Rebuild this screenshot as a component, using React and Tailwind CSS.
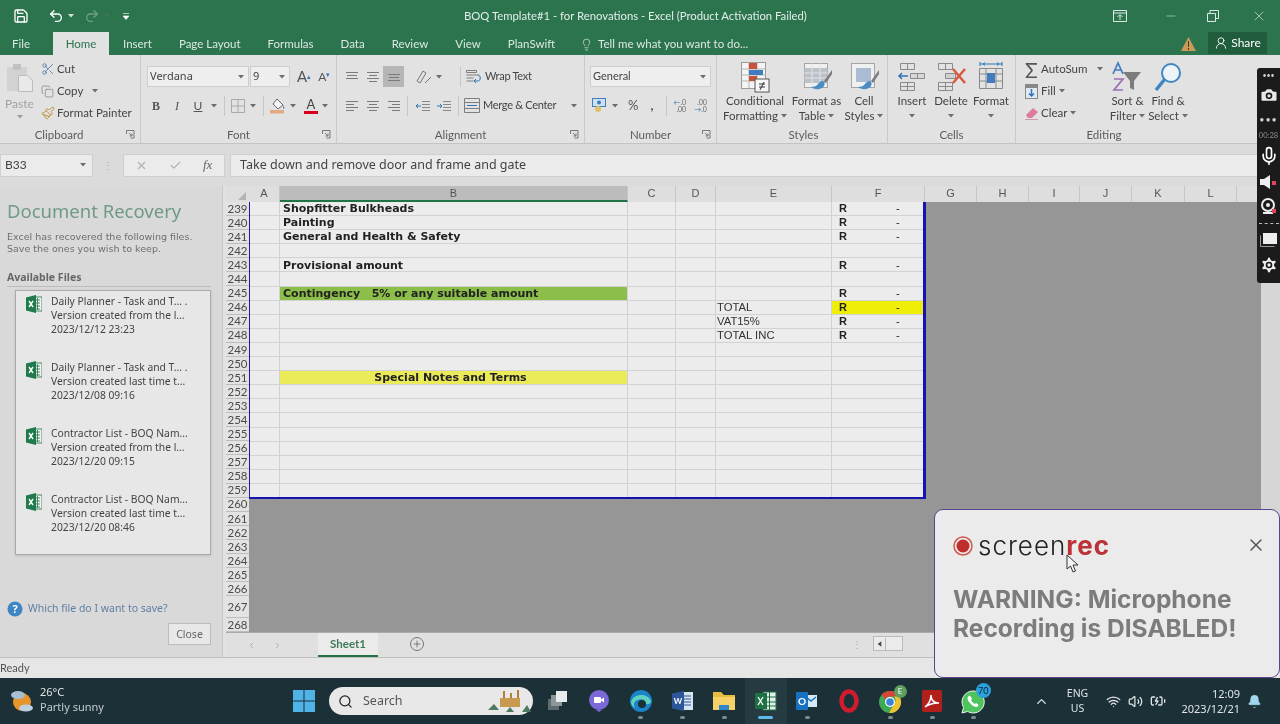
import {
  Scissors, Copy, Paintbrush, Undo2, Redo2, X, Minus, Lightbulb, UserRound, Save, Search, Camera, Mic,
  Settings, ChevronUp, Wifi, Volume2, BatteryCharging, Bell, Plus, ChevronLeft, ChevronRight, Check,
} from "lucide-react";

const ui = "font-['Lato',sans-serif]";
const sans = "font-['Noto_Sans',sans-serif]";
const verdana = "font-['DejaVu_Sans',sans-serif]";

function Caret({ className = "" }) {
  return (
    <svg width="6" height="4" viewBox="0 0 6 4" className={"shrink-0 " + className}>
      <path d="M0 0h6L3 3.5z" fill="#6d6d6d" />
    </svg>
  );
}

function Launcher() {
  return (
    <svg width="9" height="9" viewBox="0 0 9 9" className="absolute right-[5px] top-[5px]">
      <path d="M.5 4V.5H8V8H4.5M3 3l3 3M6 3.5V6H3.5" fill="none" stroke="#777" />
    </svg>
  );
}

function Group({ className, label, launcher, children }) {
  return (
    <div className={"flex flex-col border-r border-[#cacaca] shrink-0 " + className}>
      <div className="h-[70px] flex">{children}</div>
      <div className="relative h-[18px] text-center text-[11.5px] leading-[20px] text-[#5c5c5c]">
        {label}
        {launcher && <Launcher />}
      </div>
    </div>
  );
}

function Big({ className, icon, l1, l2, caret }) {
  return (
    <div className={"flex flex-col items-center text-[11.5px] leading-[15px] text-[#444] shrink-0 " + className}>
      <div className="h-[38px] pt-[5px] flex items-center justify-center">{icon}</div>
      <div className="whitespace-nowrap h-[15px]">{l1}</div>
      <div className="whitespace-nowrap h-[15px] flex items-center gap-[3px]">
        {l2}
        {caret && <Caret />}
      </div>
    </div>
  );
}

function Lines({ kind }) {
  const rows = {
    left: [[2, 14], [2, 10], [2, 14], [2, 10]],
    center: [[2, 14], [4, 12], [2, 14], [4, 12]],
    right: [[2, 14], [6, 14], [2, 14], [6, 14]],
    top: [[2, 14], [3, 13], [2, 14]],
  }[kind];
  return (
    <svg width="16" height="14" viewBox="0 0 16 14">
      {rows.map((r, i) => (
        <path key={i} d={`M${r[0]} ${2 + i * 3}.5H${r[1]}`} stroke="#7a7a7a" />
      ))}
    </svg>
  );
}

function SmallTool({ icon, text, caret }) {
  return (
    <div className="h-[22px] flex items-center text-[11.5px] text-[#444] whitespace-nowrap">
      <div className="w-[17px] flex justify-center shrink-0">{icon}</div>
      <span className="ml-[1px]">{text}</span>
      {caret}
    </div>
  );
}

function CondIcon() {
  return (
    <svg width="32" height="32" viewBox="0 0 32 32">
      <rect x="2.5" y="1.5" width="24" height="26" fill="#f4f4f4" stroke="#9a9a9a" />
      <path d="M2.5 8h24M2.5 14h24M2.5 20h24M10 1.5v26M18 1.5v26" stroke="#b5b5b5" />
      <rect x="10" y="2" width="8" height="6" fill="#c8523a" />
      <rect x="10" y="9" width="14" height="5" fill="#3f7cc0" />
      <rect x="10" y="15" width="8" height="5" fill="#c8523a" />
      <rect x="16" y="18" width="14" height="13" fill="#f6f6f6" stroke="#555" />
      <path d="M20 23h6M20 26h6M25 21l-4 8" stroke="#333" fill="none" />
    </svg>
  );
}

function TableIcon({ cell }) {
  return (
    <svg width="32" height="32" viewBox="0 0 32 32">
      <rect x="3.5" y="2.5" width="23" height="24" fill="#f0f0f0" stroke="#a5a5a5" />
      {cell ? (
        <rect x="8" y="7" width="15" height="14" fill="#a9bcd4" />
      ) : (
        <path d="M3.5 7h23v15h-23z" fill="#bcc2c9" />
      )}
      {!cell && <path d="M3.5 12h23M3.5 17h23M11 2.5v24M19 2.5v24" stroke="#e3e3e3" />}
      <path d="M31 9 23 20l2 2 6-9z" fill="#7b7b7b" />
      <path d="M22 20c-3 0-4 2-5 3-1 2-4 3-7 3 3 3 11 3 13-1 1-2 1-4-1-5z" fill="#4a8cc4" />
    </svg>
  );
}

function CellsIcon({ type }) {
  return (
    <svg width="32" height="32" viewBox="0 0 32 32">
      {type === "insert" && (
        <g fill="none" stroke="#8a8a8a">
          <path d="M4.5 2.5h14v6h-14zM11.5 2.5v6M4.5 21.5h14v8h-14zM11.5 21.5v8M4.5 25.5h14" />
          <path d="M14.5 12.5h14v5h-14zM21.5 12.5v5" fill="#d8d8d8" />
          <path d="M3 15h9M6 12l-3 3 3 3" stroke="#2f74b5" strokeWidth="1.5" />
        </g>
      )}
      {type === "delete" && (
        <g fill="none" stroke="#8a8a8a">
          <path d="M3.5 2.5h14v6h-14zM10.5 2.5v6M3.5 21.5h14v8h-14zM10.5 21.5v8M3.5 25.5h14" />
          <path d="M10.5 12.5h10v5h-10z" fill="#d0d0d0" />
          <path d="M18 8l12 14M30 8 18 22" stroke="#d9573c" strokeWidth="2.4" />
        </g>
      )}
      {type === "format" && (
        <g fill="none" stroke="#8a8a8a">
          <path d="M4.5 7.5h23v20h-23zM4.5 13h23M4.5 20h23M11 7.5v20M21 7.5v20" />
          <rect x="12" y="12" width="8" height="10" fill="#3f7cc0" stroke="none" />
          <path d="M5 3h22M5 1v4M27 1v4M8 3l2-1.5M8 3l2 1.5M24 3l-2-1.5M24 3l-2 1.5" stroke="#2f74b5" />
        </g>
      )}
    </svg>
  );
}

function ExcelFile() {
  return (
    <svg width="16" height="18" viewBox="0 0 16 18" className="shrink-0">
      <rect x="6" y="2" width="10" height="14" fill="#f2f2f2" stroke="#1e7145" strokeWidth=".8" />
      <path d="M9 5h5M9 8h5M9 11h5M9 14h5M11.5 3v12" stroke="#1e7145" strokeWidth=".8" />
      <path d="M0 2.5 10 0v18L0 15.5z" fill="#1f7a4c" />
      <path d="M3 6l4 6M7 6l-4 6" stroke="#fff" strokeWidth="1.4" />
    </svg>
  );
}

function Recovered({ name, note, date }) {
  return (
    <div className="h-[66px] flex pl-[10px] pt-[3px] gap-[9px]">
      <ExcelFile />
      <div className="text-[10.3px] leading-[14px] text-[#444] whitespace-nowrap -mt-[1px]">
        <div>{name}</div>
        <div>{note}</div>
        <div>{date}</div>
      </div>
    </div>
  );
}

const colWidths = ["w-[30px]", "w-[348px]", "w-[48px]", "w-[40px]", "w-[116px]", "w-[91px]"];

const sheet = {
  239: { b: "Shopfitter Bulkheads", r: 1 },
  240: { b: "Painting", r: 1 },
  241: { b: "General and Health & Safety", r: 1 },
  242: {},
  243: { b: "Provisional amount", r: 1 },
  244: {},
  245: { b: "Contingency   5% or any suitable amount", r: 1, fill: "bg-[#8bbf49]" },
  246: { e: "TOTAL", r: 1, rFill: "bg-[#eeee08]" },
  247: { e: "VAT15%", r: 1 },
  248: { e: "TOTAL INC", r: 1 },
  249: {},
  250: {},
  251: { b: "Special Notes and Terms", center: 1, fill: "bg-[#ebeb5a]" },
  252: {}, 253: {}, 254: {}, 255: {}, 256: {}, 257: {}, 258: {}, 259: {},
};

function RowHead({ n, className = "h-[14.1px]" }) {
  return (
    <div className={"w-[23px] flex items-center justify-center bg-[#e3e3e3] border-b border-[#bdbdbd] text-[11.5px] leading-none text-[#4a4a4a] overflow-hidden " + className}>
      {n}
    </div>
  );
}

function SheetRow({ data }) {
  const cell = "h-full border-r border-[#d2d2d2] shrink-0";
  return (
    <div className="flex h-[14.1px] border-b border-[#d2d2d2]">
      <div className={cell + " " + colWidths[0]} />
      <div
        className={
          cell + " " + colWidths[1] + " " + (data.fill || "") + " pl-[3px] pt-[2px] flex items-center whitespace-pre font-bold text-[11px] text-[#222] " +
          verdana + (data.center ? " justify-center pr-[9px]" : "")
        }
      >
        {data.b}
      </div>
      <div className={cell + " " + colWidths[2]} />
      <div className={cell + " " + colWidths[3]} />
      <div className={cell + " " + colWidths[4] + " pl-[1px] flex items-center text-[11.3px] text-[#333] font-['Liberation_Sans',sans-serif]"}>{data.e}</div>
      <div className={"h-full shrink-0 " + colWidths[5] + " " + (data.rFill || "") + " flex items-center text-[11px] text-[#222] font-['Liberation_Sans',sans-serif]"}>
        {data.r && <b className="ml-[7px] w-[57px]">R</b>}
        {data.r && <span>-</span>}
      </div>
    </div>
  );
}

function TaskIcon({ children, dot, active }) {
  return (
    <div className={"w-[41.6px] h-[46px] flex flex-col items-center pt-[9px] shrink-0 " + (active ? "bg-[#263b41]" : "")}>
      <div className="h-[28px] flex items-center justify-center">{children}</div>
      <div className={"mt-[1px] h-[3px] rounded-full " + (active ? "w-[15px] bg-[#5dbbe8]" : dot ? "w-[5px] bg-[#7d8a8e]" : "")} />
    </div>
  );
}

export default function App() {
  const heads = [
    ["A", "w-[31px]"], ["B", "w-[348px] bg-[#bcbcbc] border-b-2 border-b-[#217346]"], ["C", "w-[48px]"], ["D", "w-[40px]"],
    ["E", "w-[116px]"], ["F", "w-[93px]"], ["G", "w-[52px]"], ["H", "w-[52px]"], ["I", "w-[51px]"], ["J", "w-[52px]"], ["K", "w-[53px]"], ["L", "w-[52px]"],
  ];

  return (
    <div className={"relative w-[1280px] h-[724px] overflow-hidden flex flex-col bg-[#e2e2e2] blur-[0.4px] " + ui}>
      {/* title bar */}
      <div className="relative h-[32px] bg-[#2b744d] flex items-center text-white shrink-0">
        <Save size={16} strokeWidth={2} className="ml-[13px]" />
        <Undo2 size={16} className="ml-[19px]" />
        <Caret className="ml-[4px] brightness-200" />
        <Redo2 size={16} className="ml-[10px] opacity-30" />
        <Caret className="ml-[4px] opacity-40" />
        <svg width="6" height="7" viewBox="0 0 6 7" className="ml-[13px]"><path d="M0 .5h6M0 3h6L3 6.5z" stroke="#fff" strokeWidth=".6" fill="#fff" /></svg>
        <div className="ml-[335px] text-[11.3px] text-[#e3eee8] whitespace-nowrap">BOQ Template#1 - for Renovations - Excel (Product Activation Failed)</div>
        <div className="ml-auto flex items-center text-[#dfeae4]">
          <svg width="14" height="12" viewBox="0 0 14 12" className="mr-[37px]"><path d="M.5.5h13v11H.5zM.5 3h13M7 10V5M4.5 7 7 4.5 9.500 7" fill="none" stroke="currentColor" /></svg>
          <Minus size={14} strokeWidth={1} className="mr-[29px]" />
          <svg width="12" height="12" viewBox="0 0 12 12" className="mr-[32px]"><path d="M.5 3.500h8v8h-8zM3 3.500V.5h8.500v8H8.500" fill="none" stroke="currentColor" /></svg>
          <X size={16} strokeWidth={1} className="mr-[13px]" />
        </div>
      </div>

      {/* tab row */}
      <div className="h-[23px] bg-[#2b744d] flex items-end text-[11.5px] text-[#dce8e1] shrink-0 relative">
        <div className="w-[53px] pl-[12px] leading-[22px]">File</div>
        <div className="w-[56px] h-[23px] bg-[#e2e2e2] text-[#2b744d] text-center leading-[23px]">Home</div>
        <div className="ml-[14px] leading-[23px]">Insert</div>
        <div className="ml-[27px] leading-[23px]">Page Layout</div>
        <div className="ml-[27px] leading-[23px]">Formulas</div>
        <div className="ml-[27px] leading-[23px]">Data</div>
        <div className="ml-[27px] leading-[23px]">Review</div>
        <div className="ml-[27px] leading-[23px]">View</div>
        <div className="ml-[27px] leading-[23px]">PlanSwift</div>
        <Lightbulb size={13} strokeWidth={1.3} className="ml-[25px] mb-[4px]" />
        <div className="ml-[5px] leading-[23px]">Tell me what you want to do...</div>
        <svg width="15" height="14" viewBox="0 0 15 14" className="ml-auto mr-[12px] mb-[4px]"><path d="M7.500 0 15 14H0z" fill="#cc9a55" /><path d="M7.500 4v6M7.500 11v2" stroke="#3c3c3c" /></svg>
        <div className="w-[59px] h-[22px] mr-[13px] mb-[1px] bg-[#1f5d3c] flex items-center justify-center gap-[3px] text-[12px] text-white">
          <UserRound size={14} strokeWidth={1.5} />
          Share
        </div>
      </div>

      {/* ribbon */}
      <div className="h-[89px] flex bg-[#e2e2e2] shrink-0 border-b border-[#c4c4c4]">
        <Group className="w-[141px]" label={<span className="-ml-[22px]">Clipboard</span>} launcher>
          <div className="w-[39px] flex flex-col items-center opacity-60 text-[12px] text-[#777]">
            <svg width="28" height="30" viewBox="0 0 28 30" className="mt-[8px]">
              <rect x="1" y="4" width="20" height="24" fill="#c9c9c9" />
              <rect x="7" y="1" width="8" height="6" fill="#aaa" />
              <path d="M12.500 12.500h9l5 5v11h-14z" fill="#efefef" stroke="#a2a2a2" />
            </svg>
            <div className="mt-[3px] leading-[15px]">Paste</div>
            <Caret className="mt-[4px]" />
          </div>
          <div className="flex flex-col pt-[3px]">
            <SmallTool icon={<Scissors size={14} strokeWidth={1.4} className="text-[#4a7aa8]" />} text="Cut" />
            <SmallTool icon={<Copy size={13} strokeWidth={1.2} className="text-[#777]" />} text="Copy" caret={<Caret className="ml-[9px]" />} />
            <SmallTool icon={<Paintbrush size={14} strokeWidth={1.6} className="text-[#b98a2e]" />} text="Format Painter" />
          </div>
        </Group>

        <Group className="w-[196px]" label="Font" launcher>
          <div className="flex flex-col pl-[6px] pt-[11px]">
            <div className="flex items-center h-[21px]">
              <div className={"w-[102px] h-[21px] bg-[#eeeeee] border border-[#cfcfcf] flex items-center px-[2px] text-[11px] text-[#444] " + sans}>
                Verdana
                <Caret className="ml-auto mr-[2px]" />
              </div>
              <div className={"w-[40px] h-[21px] ml-[1px] bg-[#eeeeee] border border-[#cfcfcf] flex items-center px-[2px] text-[11px] text-[#444] " + sans}>
                9
                <Caret className="ml-auto mr-[2px]" />
              </div>
              <span className="ml-[7px] text-[15px] text-[#555]">A<sup className="text-[7px] text-[#2f74b5]">▴</sup></span>
              <span className="ml-[7px] text-[12px] text-[#555]">A<sup className="text-[7px] text-[#2f74b5]">▾</sup></span>
            </div>
            <div className="flex items-center h-[21px] mt-[8px] text-[12px] text-[#555]">
              <b className="w-[16px] ml-[1px] text-center font-['Liberation_Serif',serif]">B</b>
              <i className="w-[16px] ml-[5px] text-center font-['Liberation_Serif',serif]">I</i>
              <u className="w-[16px] ml-[5px] text-center">U</u>
              <Caret className="ml-[5px]" />
              <div className="w-px h-[20px] bg-[#c6c6c6] ml-[7px]" />
              <svg width="14" height="14" viewBox="0 0 14 14" className="ml-[6px]"><path d="M.5.5h13v13H.5zM7 .5v13M.5 7h13" fill="none" stroke="#aaa" /></svg>
              <Caret className="ml-[5px]" />
              <div className="w-px h-[20px] bg-[#c6c6c6] ml-[7px]" />
              <svg width="16" height="17" viewBox="0 0 16 17" className="ml-[6px]"><path d="m7 2 6 6-5 4-5-5z" fill="#f4f4f4" stroke="#666" /><path d="M13 8c1 2 2 3 1 4-1 0-1-2-1-4z" fill="#3f7cc0" /><rect y="13" width="14" height="3.500" fill="#e3a982" /></svg>
              <Caret className="ml-[4px]" />
              <div className="w-[16px] ml-[7px] flex flex-col items-center text-[13px] leading-[13px] text-[#444]">
                A
                <div className="w-[14px] h-[3px] bg-[#d6001c]" />
              </div>
              <Caret className="ml-[3px]" />
            </div>
          </div>
        </Group>

        <Group className="w-[248px]" label="Alignment" launcher>
          <div className="flex flex-col pl-[4px] pt-[11px]">
            <div className="flex items-center h-[21px]">
              <div className="w-[21px] flex justify-center"><Lines kind="top" /></div>
              <div className="w-[21px] flex justify-center"><Lines kind="center" /></div>
              <div className="w-[21px] h-[21px] bg-[#b6b6b6] flex items-end justify-center pb-[1px]"><Lines kind="top" /></div>
              <svg width="17" height="16" viewBox="0 0 17 16" className="ml-[11px]"><path d="M2 12 8 2l3 2-6 10zM10 14l6-6" fill="none" stroke="#777" /></svg>
              <Caret className="ml-[4px]" />
              <div className="w-px h-[20px] bg-[#c6c6c6] ml-[18px]" />
              <svg width="16" height="16" viewBox="0 0 16 16" className="ml-[5px]"><path d="M.5 1.500h10v2H.5zM.5 6h12M.5 9h7M.5 12h7" fill="none" stroke="#7e7e7e" /><path d="M8 12h4c3 0 3-6 0-6M10 10l-2 2 2 2" fill="none" stroke="#2f74b5" /></svg>
              <span className="ml-[3px] text-[11px] tracking-[-0.3px] text-[#444] whitespace-nowrap">Wrap Text</span>
            </div>
            <div className="flex items-center h-[21px] mt-[8px]">
              <div className="w-[21px] flex justify-center"><Lines kind="left" /></div>
              <div className="w-[21px] flex justify-center"><Lines kind="center" /></div>
              <div className="w-[21px] flex justify-center"><Lines kind="right" /></div>
              <div className="w-px h-[20px] bg-[#c6c6c6] ml-[3px]" />
              <svg width="16" height="14" viewBox="0 0 16 14" className="ml-[7px]"><path d="M7 2.500h8M7 5.500h8M7 8.500h8M7 11.500h8" stroke="#888" /><path d="M6 7H1M3 5 1 7l2 2" stroke="#2f74b5" fill="none" /></svg>
              <svg width="16" height="14" viewBox="0 0 16 14" className="ml-[5px]"><path d="M7 2.500h8M7 5.500h8M7 8.500h8M7 11.500h8" stroke="#888" /><path d="M1 7h5M4 5l2 2-2 2" stroke="#2f74b5" fill="none" /></svg>
              <div className="w-px h-[20px] bg-[#c6c6c6] ml-[6px]" />
              <svg width="16" height="15" viewBox="0 0 16 15" className="ml-[5px]"><path d="M.5 .5h15v14H.5zM.5 4.500h15M.5 10.500h15" fill="none" stroke="#7e7e7e" /><path d="M3 7.500h10" stroke="#2f74b5" /></svg>
              <span className="ml-[3px] w-[88px] text-[11px] tracking-[-0.3px] text-[#444] whitespace-nowrap">Merge &amp; Center</span>
              <Caret />
            </div>
          </div>
        </Group>

        <Group className="w-[132px]" label="Number" launcher>
          <div className="flex flex-col pl-[5px] pt-[11px]">
            <div className="w-[121px] h-[21px] bg-[#eeeeee] border border-[#cfcfcf] flex items-center px-[2px] text-[11px] text-[#444]">
              General
              <Caret className="ml-auto mr-[2px]" />
            </div>
            <div className="flex items-center h-[21px] mt-[8px] text-[#555]">
              <svg width="16" height="15" viewBox="0 0 16 15" className="ml-[2px]"><rect x=".5" y=".5" width="13" height="8" fill="#cfe0f0" stroke="#3f7cc0" /><circle cx="7" cy="4.500" r="2" fill="#3f7cc0" /><circle cx="6" cy="11" r="3" fill="#e3c06a" /></svg>
              <Caret className="ml-[4px]" />
              <span className="ml-[10px] text-[13px]">%</span>
              <span className="ml-[12px] text-[13px] font-bold">,</span>
              <div className="w-px h-[20px] bg-[#c6c6c6] ml-[13px]" />
              <div className="ml-[6px] text-[7px] leading-[7px] text-[#666] text-right"><span className="text-[#2f74b5]">←</span>.0<br />.00</div>
              <div className="ml-[8px] text-[7px] leading-[7px] text-[#666] text-right">.00<br /><span className="text-[#2f74b5]">→</span>.0</div>
            </div>
          </div>
        </Group>

        <Group className="w-[171px] pl-[3px]" label="Styles">
          <Big className="w-[70px]" icon={<CondIcon />} l1="Conditional" l2="Formatting" caret />
          <Big className="w-[53px]" icon={<TableIcon />} l1="Format as" l2="Table" caret />
          <Big className="w-[42px]" icon={<TableIcon cell />} l1="Cell" l2="Styles" caret />
        </Group>

        <Group className="w-[128px]" label="Cells">
          <Big className="w-[48px]" icon={<CellsIcon type="insert" />} l1="Insert" l2="" caret />
          <Big className="w-[30px]" icon={<CellsIcon type="delete" />} l1="Delete" l2="" caret />
          <Big className="w-[50px]" icon={<CellsIcon type="format" />} l1="Format" l2="" caret />
        </Group>

        <Group className="w-[176px] border-r-0" label="Editing">
          <div className="w-[92px] pl-[7px] pt-[3px] flex flex-col">
            <SmallTool icon={<span className="text-[21px] leading-none text-[#555]">Σ</span>} text="AutoSum" caret={<Caret className="ml-[9px]" />} />
            <SmallTool
              icon={<svg width="13" height="15" viewBox="0 0 13 15"><rect y="0" width="13" height="3" fill="#888" /><rect x=".5" y="3.500" width="12" height="11" fill="#dfe9f3" stroke="#888" /><path d="M6.500 5v7M4 9.500l2.500 2.500L9 9.500" fill="none" stroke="#2f74b5" strokeWidth="1.500" /></svg>}
              text="Fill"
              caret={<Caret className="ml-[3px]" />}
            />
            <SmallTool
              icon={<svg width="14" height="14" viewBox="0 0 14 14"><path d="M1 9 8 2l5 4-6 6H3z" fill="#dc7c9c" /><path d="M0 13.500h13" stroke="#c9a" /></svg>}
              text="Clear"
              caret={<Caret className="ml-[3px]" />}
            />
          </div>
          <Big
            className="w-[39px]"
            icon={
              <svg width="32" height="32" viewBox="0 0 32 32">
                <path d="M1 13 6 2l5 11M3 9h6" fill="none" stroke="#3f7cc0" strokeWidth="1.700" />
                <path d="M2 18h9l-9 11h9" fill="none" stroke="#9a6fb8" strokeWidth="1.700" />
                <path d="M11 11h18l-7 9v9l-4-2v-7z" fill="#7c7c7c" />
              </svg>
            }
            l1="Sort &"
            l2="Filter"
            caret
          />
          <Big
            className="w-[42px]"
            icon={
              <svg width="32" height="32" viewBox="0 0 32 32">
                <circle cx="19" cy="12" r="9" fill="#eef3f8" stroke="#3f86c4" strokeWidth="2" />
                <path d="M12.500 18.500 4 29" stroke="#3f86c4" strokeWidth="3.500" />
              </svg>
            }
            l1="Find &"
            l2="Select"
            caret
          />
        </Group>
      </div>

      {/* formula bar */}
      <div className="h-[42px] bg-[#dbdbdb] flex items-center shrink-0 text-[#555]">
        <div className="w-[93px] h-[23px] bg-[#ebebeb] border border-[#cfcfcf] flex items-center pl-[4px] text-[12px] text-[#444]">
          B33
          <Caret className="ml-auto mr-[6px]" />
        </div>
        <div className="w-[30px] text-center text-[10px] text-[#aaa]">⋮</div>
        <div className="w-[102px] h-[23px] bg-[#ebebeb] border border-[#cfcfcf] flex items-center text-[#b0b0b0]">
          <X size={13} className="ml-[11px]" />
          <Check size={13} className="ml-[21px]" />
          <i className="ml-[21px] text-[13px] text-[#666] font-['Liberation_Serif',serif]">fx</i>
        </div>
        <div className={"ml-[5px] flex-1 h-[23px] bg-[#ebebeb] border border-[#cfcfcf] flex items-center pl-[9px] text-[12.5px] text-[#444] whitespace-nowrap " + sans}>
          Take down and remove door and frame and gate
        </div>
      </div>

      {/* workspace */}
      <div className="flex-1 flex min-h-0">
        <div className={"w-[223px] shrink-0 bg-[#d9d9d9] border-r border-[#c8c8c8] flex flex-col pl-[7px] pr-[11px] " + sans}>
          <div className="mt-[12px] text-[18.5px] leading-[26px] text-[#6f9a84] whitespace-nowrap">Document Recovery</div>
          <div className={"mt-[7px] text-[9.5px] leading-[12px] text-[#6f6f6f] whitespace-nowrap " + verdana}>
            Excel has recovered the following files.
            <br />
            Save the ones you wish to keep.
          </div>
          <div className="mt-[15px] h-[17px] text-[10.5px] font-bold leading-[14px] text-[#666] border-b border-[#bcbcbc]">Available Files</div>
          <div className="mt-[3px] ml-[8px] h-[265px] w-[196px] bg-[#e7e7e7] border border-[#a9a9a9] pt-[1px] shadow-sm">
            <Recovered name="Daily Planner - Task and T... ." note="Version created from the l..." date="2023/12/12 23:23" />
            <Recovered name="Daily Planner - Task and T... ." note="Version created last time t..." date="2023/12/08 09:16" />
            <Recovered name="Contractor List - BOQ Nam..." note="Version created from the l..." date="2023/12/20 09:15" />
            <Recovered name="Contractor List - BOQ Nam..." note="Version created last time t..." date="2023/12/20 08:46" />
          </div>
          <div className="mt-[46px] flex items-center h-[16px] text-[10.500px] text-[#5f7fa3] whitespace-nowrap">
            <svg width="16" height="16" viewBox="0 0 16 16" className="shrink-0"><circle cx="8" cy="8" r="7.500" fill="#3f86c4" /><text x="8" y="12" textAnchor="middle" fontSize="11" fontWeight="700" fill="#fff">?</text></svg>
            <span className="ml-[5px]">Which file do I want to save?</span>
          </div>
          <div className="mt-[6px] ml-auto w-[43px] h-[22px] bg-[#e8e8e8] border border-[#bdbdbd] text-center text-[10.500px] leading-[20px] text-[#666]">Close</div>
        </div>

        <div className="flex-1 min-w-0 ml-[3px] flex flex-col">
          {/* column headers */}
          <div className="h-[16px] flex bg-[#dedede] shrink-0 text-[11px] text-[#555] font-['Liberation_Sans',sans-serif]">
            <div className="w-[23px] shrink-0 flex items-end justify-end pr-[3px] pb-[2px]">
              <svg width="8" height="8" viewBox="0 0 8 8"><path d="M8 0v8H0z" fill="#b3b3b3" /></svg>
            </div>
            {heads.map(([h, w]) => (
              <div key={h} className={"shrink-0 text-center leading-[15px] border-r border-[#c6c6c6] " + w}>{h}</div>
            ))}
            <div className="flex-1" />
          </div>

          {/* cells */}
          <div className="h-[430px] flex bg-[#969696] shrink-0 overflow-hidden">
            <div className="flex flex-col shrink-0">
              {Object.keys(sheet).map((n) => (
                <RowHead key={n} n={n} />
              ))}
              {[260, 261, 262, 263, 264, 265, 266].map((n) => (
                <RowHead key={n} n={n} />
              ))}
              <RowHead n="267" className="h-[22px]" />
              <RowHead n="268" className="h-[14px]" />
            </div>
            <div className="h-[297px] w-[677px] bg-[#ececec] border-l border-l-[#1c1c9c] border-r-[3px] border-b-[2px] border-r-[#1414b0] border-b-[#1414b0] overflow-hidden shrink-0">
              {Object.entries(sheet).map(([n, d]) => (
                <SheetRow key={n} data={d} />
              ))}
            </div>
            <div className="flex-1" />
            <div className="w-[19px] bg-[#d6d6d6] shrink-0" />
          </div>

          {/* sheet tabs */}
          <div className="flex-1 flex items-start bg-[#e0e0e0] border-t border-[#aaa] text-[#9c9c9c]">
            <ChevronLeft size={9} className="ml-[21px] mt-[8px]" />
            <ChevronRight size={9} className="ml-[17px] mt-[8px]" />
            <div className="ml-[36px] w-[60px] h-[24px] bg-[#ebebeb] border-b-2 border-[#217346] text-[11.5px] leading-[22px] font-bold text-center text-[#3f7a58]">Sheet1</div>
            <div className="ml-[32px] mt-[4px] w-[14px] h-[14px] rounded-full border border-[#777] flex items-center justify-center text-[#666]">
              <Plus size={10} />
            </div>
            <div className="ml-[428px] mt-[3px] text-[10px] leading-[16px] text-[#aaa]">⋮</div>
            <div className="ml-[11px] mt-[3px] w-[30px] h-[15px] bg-[#ebebeb] border border-[#bbb] flex items-center">
              <svg width="12" height="12" viewBox="0 0 12 12" className="border-r border-[#bbb]"><path d="M8 3v6L4 6z" fill="#444" /></svg>
            </div>
          </div>
        </div>
      </div>

      {/* status bar */}
      <div className="h-[21px] bg-[#e6e6e6] border-t border-[#bebebe] text-[11px] leading-[20px] text-[#555] shrink-0">Ready</div>

      {/* taskbar */}
      <div className="h-[46px] bg-[#1c3037] flex items-center text-[#dfe5e7] shrink-0">
        <svg width="26" height="24" viewBox="0 0 26 24" className="ml-[9px]">
          <circle cx="13" cy="13" r="9" fill="#e8942c" />
          <ellipse cx="9" cy="6" rx="7" ry="4" fill="#a7bfd3" />
          <ellipse cx="17" cy="19" rx="7" ry="3.500" fill="#bcd0e0" />
        </svg>
        <div className={"ml-[5px] w-[253px] mb-[4px] text-[11px] leading-[15px] whitespace-nowrap " + sans}>
          26°C
          <br />
          <span className="text-[#c3cccf]">Partly sunny</span>
        </div>
        <svg width="22" height="22" viewBox="0 0 22 22" className="shrink-0">
          <path d="M0 0h10.500v10.500H0zM11.500 0H22v10.500H11.500zM0 11.500h10.500V22H0zM11.500 11.500H22V22H11.500z" fill="#4fb3e8" />
        </svg>
        <div className={"ml-[14px] w-[204px] h-[28px] rounded-full bg-[#e8e8e8] flex items-center pl-[9px] text-[12.500px] text-[#555] shrink-0 " + sans}>
          <Search size={15} className="text-[#222]" />
          <span className="ml-[10px]">Search</span>
          <svg width="46" height="26" viewBox="0 0 46 26" className="ml-auto mr-[1px]">
            <path d="M14 10h20v9H14z" fill="#c89a50" />
            <path d="M18 10V3M25 10V5M32 10V2" stroke="#b07f3a" strokeWidth="2" />
            <path d="M2 22l6-6 5 6zM36 24l5-7 4 7zM20 24l4-5 4 5z" fill="#4e7a62" />
          </svg>
        </div>
        <div className="ml-[4px] flex items-center">
          <TaskIcon>
            <svg width="22" height="22" viewBox="0 0 22 22"><rect x="1" y="9" width="11" height="11" fill="#5e6b70" /><rect x="4" y="5" width="11" height="11" fill="#8d979a" /><rect x="9" y="1" width="11" height="11" fill="#e8ecec" /></svg>
          </TaskIcon>
          <TaskIcon>
            <svg width="22" height="22" viewBox="0 0 22 22"><circle cx="11" cy="10" r="10" fill="#7b69d8" /><path d="M8 20l3 2 3-2z" fill="#7b69d8" /><rect x="6" y="7" width="7" height="6" rx="1" fill="#fff" /><path d="m13 9.500 3-2v5l-3-2z" fill="#fff" /></svg>
          </TaskIcon>
          <TaskIcon dot>
            <svg width="24" height="24" viewBox="0 0 24 24"><circle cx="12" cy="12" r="11" fill="#1a83c9" /><path d="M2 13C4 5 18 3 22 12c0 4-5 4-6 2 0-3-3-5-7-3-4 1-5 4-3 8-2-1-4-3-4-6z" fill="#5fd0c0" /><circle cx="13" cy="15" r="4" fill="#1c3037" /></svg>
          </TaskIcon>
          <TaskIcon dot>
            <svg width="22" height="22" viewBox="0 0 22 22"><rect x="7" y="2" width="14" height="18" fill="#d9e3f0" /><path d="M10 6h9M10 9h9M10 12h9M10 15h9" stroke="#2b579a" /><path d="M0 3.500 12 1v20L0 18.500z" fill="#2b579a" /><text x="6" y="14" textAnchor="middle" fontSize="8" fontWeight="700" fill="#fff">W</text></svg>
          </TaskIcon>
          <TaskIcon dot>
            <svg width="24" height="22" viewBox="0 0 24 22"><path d="M1 2h8l3 3h11v15H1z" fill="#e8bc3f" /><rect x="1" y="7" width="22" height="13" fill="#f4d268" /><rect x="7" y="15" width="10" height="5" fill="#2f86c8" /></svg>
          </TaskIcon>
          <TaskIcon active>
            <svg width="22" height="22" viewBox="0 0 22 22"><rect x="8" y="2" width="13" height="18" fill="#e3eee8" stroke="#1e7145" /><path d="M14.500 2v18M8 7h13M8 12h13M8 16h13" stroke="#1e7145" /><rect y="3" width="12" height="16" fill="#1e7145" /><path d="m3 7 5 8M8 7l-5 8" stroke="#fff" strokeWidth="1.300" /></svg>
          </TaskIcon>
          <TaskIcon dot>
            <svg width="22" height="22" viewBox="0 0 22 22"><rect x="9" y="5" width="12" height="12" fill="#d7e8f6" /><path d="m10 7 5 4 5-4" stroke="#1672c0" fill="none" strokeWidth="1.500" /><rect y="2" width="12" height="18" fill="#1672c0" /><text x="6" y="15" textAnchor="middle" fontSize="10" fontWeight="700" fill="#fff">O</text></svg>
          </TaskIcon>
          <TaskIcon>
            <svg width="22" height="24" viewBox="0 0 22 24"><ellipse cx="11" cy="12" rx="7.500" ry="9.500" fill="none" stroke="#d11c2f" strokeWidth="4.500" /></svg>
          </TaskIcon>
          <TaskIcon dot>
            <div className="relative w-[26px] h-[26px]">
              <svg width="24" height="24" viewBox="0 0 24 24" className="mt-[2px]">
                <circle cx="12" cy="12" r="11" fill="#3faa55" />
                <path d="M12 1a11 11 0 0 1 9.500 5.500H12a6 6 0 0 0-5 3L3.500 4.500A11 11 0 0 1 12 1z" fill="#d9443a" />
                <path d="M21.500 6.500A11 11 0 0 1 11 23l5-9a5 5 0 0 0 0-7.500z" fill="#efc232" />
                <circle cx="12" cy="12" r="5" fill="#fff" />
                <circle cx="12" cy="12" r="3.800" fill="#3b82d9" />
              </svg>
              <div className="absolute -right-[3px] -top-[3px] w-[13px] h-[13px] rounded-full bg-[#5f9e5f] text-[8px] leading-[13px] text-center text-white">E</div>
            </div>
          </TaskIcon>
          <TaskIcon dot>
            <svg width="20" height="22" viewBox="0 0 20 22"><rect width="20" height="22" rx="2" fill="#b3201c" /><path d="M3 17c4-3 6-8 6-12 0 5 3 8 8 8-6 0-10 1-14 4z" fill="none" stroke="#fff" strokeWidth="1.500" /></svg>
          </TaskIcon>
          <TaskIcon dot>
            <div className="relative w-[26px] h-[26px]">
              <svg width="24" height="24" viewBox="0 0 24 24" className="mt-[2px]">
                <path d="M12 1a11 11 0 0 0-9.500 16.500L1 23l5.700-1.500A11 11 0 1 0 12 1z" fill="#4fc35f" stroke="#e9f5ea" strokeWidth="1" />
                <path d="M8 6c-2 1-2 4 1 7 3 4 7 5 8 3 1-1 0-2-2-3l-1 1c-2-1-3-2-4-4l1-1c-1-2-2-4-3-3z" fill="#fff" />
              </svg>
              <div className="absolute -right-[4px] -top-[5px] w-[15px] h-[15px] rounded-full bg-[#2aa0dc] text-[9px] leading-[15px] text-center text-[#10222b]">70</div>
            </div>
          </TaskIcon>
        </div>
        <ChevronUp size={15} strokeWidth={2.2} className="ml-[39px] shrink-0" />
        <div className={"ml-[15px] w-[28px] text-[10.500px] leading-[15px] text-center shrink-0 " + sans}>
          ENG
          <br />
          US
        </div>
        <Wifi size={15} className="ml-[14px] shrink-0" />
        <Volume2 size={15} className="ml-[7px] shrink-0" />
        <BatteryCharging size={16} className="ml-[7px] shrink-0" />
        <div className={"ml-auto text-[11px] leading-[15px] text-right text-[#dfe5e7] whitespace-nowrap " + sans}>
          12:09
          <br />
          2023/12/21
        </div>
        <Bell size={15} fill="#9fd8ee" strokeWidth={1} className="ml-[7px] mr-[18px] text-[#9fd8ee] shrink-0" />
      </div>

      {/* screen recorder toolbar */}
      <div className="absolute left-[1257px] top-[68px] w-[23px] h-[215px] bg-[#1b1b1b] rounded-l-[3px] flex flex-col items-center text-white">
        <div className="h-[12px] mt-[1px] text-[7px] leading-[12px] text-[#cfcfcf]">••• </div>
        <Camera size={20} fill="#e8e8e8" stroke="#1b1b1b" className="mt-[4px] text-[#eee]" />
        <div className="mt-[10px] text-[9px] leading-[10px] text-[#cfcfcf] tracking-[1px]">•••</div>
        <div className="mt-[6px] text-[7.500px] leading-[10px] text-[#8d8d8d]">00:28</div>
        <Mic size={20} className="mt-[5px]" />
        <svg width="17" height="14" viewBox="0 0 17 14" className="mt-[9px]"><path d="M0 4h4l6-4v14l-6-4H0z" fill="#eee" /><rect x="12" y="6" width="4" height="4" fill="#e0455a" /></svg>
        <svg width="17" height="17" viewBox="0 0 17 17" className="mt-[9px]"><circle cx="8" cy="7" r="6" fill="none" stroke="#eee" strokeWidth="2" /><circle cx="8" cy="7" r="2" fill="#eee" /><path d="M3 15h10" stroke="#eee" strokeWidth="2" /><rect x="12" y="11" width="4" height="4" fill="#e0455a" /></svg>
        <div className="mt-[8px] w-[20px] border-t border-dashed border-[#bbb]" />
        <svg width="17" height="15" viewBox="0 0 17 15" className="mt-[8px]"><path d="M.5 3.500v11h14" fill="none" stroke="#999" /><rect x="3" y="1" width="14" height="11" fill="#eee" /></svg>
        <Settings size={20} fill="#eee" stroke="#1b1b1b" className="mt-[8px]" />
      </div>

      {/* screenrec warning */}
      <div className="absolute left-[934px] top-[509px] w-[346px] h-[169px] rounded-[9px] bg-[#ebebeb] border border-[#5b438f] pl-[18px] pt-[21px]">
        <div className="flex items-center h-[30px]">
          <svg width="20" height="20" viewBox="0 0 20 20"><circle cx="10" cy="10" r="9" fill="none" stroke="#d4574f" strokeWidth="1.500" /><circle cx="10" cy="10" r="6.500" fill="#bf2e2c" /></svg>
          <div className="ml-[5px] font-['Inter',sans-serif] text-[26px] tracking-[1px] text-[#222] leading-[30px]">
            <span className="font-light">screen</span>
            <span className="font-bold text-[#bc3236]">rec</span>
          </div>
        </div>
        <div className="mt-[24px] font-['Inter',sans-serif] text-[24.500px] leading-[29px] font-bold text-[#7c7c7c] whitespace-nowrap">
          WARNING: Microphone
          <br />
          Recording is DISABLED!
        </div>
        <X size={20} strokeWidth={1.8} className="absolute left-[311px] top-[25px] text-[#555]" />
        <svg width="13" height="19" viewBox="0 0 13 19" className="absolute left-[131px] top-[44px]">
          <path d="M1 1v14l3.500-3 2.500 6 2.500-1-2.500-6H12z" fill="#f4f4f4" stroke="#333" />
        </svg>
      </div>
    </div>
  );
}
